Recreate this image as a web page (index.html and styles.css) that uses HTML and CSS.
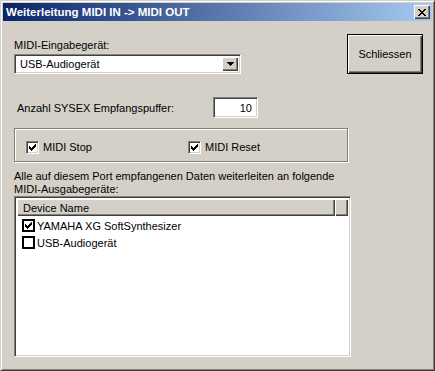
FILE: index.html
```html
<!DOCTYPE html>
<html lang="de">
<head>
    <meta charset="UTF-8">
    <meta name="viewport" content="width=device-width, initial-scale=1.0">
    <title>Weiterleitung MIDI IN -&gt; MIDI OUT</title>
    <link rel="stylesheet" href="styles.css">
</head>
<body>
    <div class="window">
        <div class="titlebar">
            <span class="title">Weiterleitung MIDI IN -&gt; MIDI OUT</span>
            <div class="close-btn">
                <svg width="8" height="7" viewBox="0 0 8 7" shape-rendering="crispEdges">
                    <path d="M0 0h2v1h-2z M6 0h2v1h-2z M1 1h2v1h-2z M5 1h2v1h-2z M2 2h4v1h-4z M3 3h2v1h-2z M2 4h4v1h-4z M1 5h2v1h-2z M5 5h2v1h-2z M0 6h2v1h-2z M6 6h2v1h-2z" fill="#000"/>
                </svg>
            </div>
        </div>

        <div class="content">
            <div class="top-row">
                <div class="input-group">
                    <label>MIDI-Eingabegerät:</label>
                    <div class="combo">
                        <span class="combo-text">USB-Audiogerät</span>
                        <span class="combo-btn">
                            <svg width="7" height="4" viewBox="0 0 7 4" shape-rendering="crispEdges">
                                <path d="M0 0h7v1h-7z M1 1h5v1h-5z M2 2h3v1h-3z M3 3h1v1h-1z" fill="#000"/>
                            </svg>
                        </span>
                    </div>
                </div>
                <button type="button" class="btn-default">Schliessen</button>
            </div>

            <div class="sysex-row">
                <label>Anzahl SYSEX Empfangspuffer:</label>
                <div class="num-box">10</div>
            </div>

            <div class="group">
                <div class="check first">
                    <span class="box">
                        <svg width="7" height="7" viewBox="0 0 7 7" shape-rendering="crispEdges"><path class="tick" d="M6 0h1v1h-1z M5 1h2v1h-2z M0 2h1v1h-1z M4 2h3v1h-3z M0 3h2v1h-2z M3 3h3v1h-3z M0 4h5v1h-5z M1 5h3v1h-3z M2 6h1v1h-1z"/></svg>
                    </span>
                    <span>MIDI Stop</span>
                </div>
                <div class="check">
                    <span class="box">
                        <svg width="7" height="7" viewBox="0 0 7 7" shape-rendering="crispEdges"><path class="tick" d="M6 0h1v1h-1z M5 1h2v1h-2z M0 2h1v1h-1z M4 2h3v1h-3z M0 3h2v1h-2z M3 3h3v1h-3z M0 4h5v1h-5z M1 5h3v1h-3z M2 6h1v1h-1z"/></svg>
                    </span>
                    <span>MIDI Reset</span>
                </div>
            </div>

            <p class="info">Alle auf diesem Port empfangenen Daten weiterleiten an folgende<br>MIDI-Ausgabegeräte:</p>

            <div class="listview">
                <div class="lv-header">
                    <div class="lv-col name">Device Name</div>
                    <div class="lv-col rest"></div>
                </div>
                <div class="lv-body">
                    <div class="lv-row">
                        <span class="flat-box">
                            <svg width="7" height="7" viewBox="0 0 7 7" shape-rendering="crispEdges"><path class="tick" d="M6 0h1v1h-1z M5 1h2v1h-2z M0 2h1v1h-1z M4 2h3v1h-3z M0 3h2v1h-2z M3 3h3v1h-3z M0 4h5v1h-5z M1 5h3v1h-3z M2 6h1v1h-1z"/></svg>
                        </span>
                        <span>YAMAHA XG SoftSynthesizer</span>
                    </div>
                    <div class="lv-row">
                        <span class="flat-box"></span>
                        <span>USB-Audiogerät</span>
                    </div>
                </div>
            </div>
        </div>
    </div>
</body>
</html>
```

FILE: styles.css
```css
body {
    margin: 0;
    font-family: "Liberation Sans", Arial, sans-serif;
    font-size: 11px;
    color: #000;
    background: #d4d0c8;
}
.window {
    width: 435px;
    height: 371px;
    box-sizing: border-box;
    border: 1px solid;
    border-color: #d4d0c8 #404040 #404040 #d4d0c8;
    box-shadow: inset 1px 1px #fff, inset -1px -1px #808080;
    padding: 2px;
    background: #d4d0c8;
}
.titlebar {
    height: 18px;
    display: flex;
    align-items: center;
    justify-content: space-between;
    padding: 0 2px 0 3px;
    background: linear-gradient(to right, #0a246a, #a6caf0);
    color: #fff;
}
.title {
    font-weight: bold;
    font-size: 11.5px;
}
.close-btn {
    width: 16px;
    height: 14px;
    display: flex;
    align-items: center;
    justify-content: center;
    background: #d4d0c8;
    box-shadow: inset 1px 1px #fff, inset -1px -1px #404040, inset -2px -2px #808080;
}

.content {
    padding-left: 11px;
}
.top-row {
    display: flex;
    align-items: flex-start;
}
.input-group {
    padding-top: 18px;
}
.input-group label {
    display: block;
    line-height: 13px;
    margin-bottom: 2px;
}
.combo {
    width: 227px;
    height: 20px;
    box-sizing: border-box;
    display: flex;
    align-items: center;
    padding: 2px;
    background: #fff;
    border: 1px solid;
    border-color: #808080 #fff #fff #808080;
    box-shadow: inset 1px 1px #404040, inset -1px -1px #d4d0c8;
}
.combo-text {
    flex: 1;
    padding-left: 3px;
}
.combo-btn {
    width: 16px;
    height: 14px;
    display: flex;
    align-items: center;
    justify-content: center;
    background: #d4d0c8;
    box-shadow: inset 1px 1px #fff, inset -1px -1px #404040, inset -2px -2px #808080;
}
.btn-default {
    margin: 13px 9px 0 auto;
    width: 76px;
    height: 40px;
    font-family: inherit;
    font-size: 11px;
    color: #000;
    background: #d4d0c8;
    border: 1px solid #000;
    box-shadow: inset 1px 1px #fff, inset -1px -1px #404040, inset -2px -2px #808080;
    padding: 0;
}

.sysex-row {
    display: flex;
    align-items: center;
    margin-top: 23px;
    padding-left: 3px;
}
.sysex-row label {
    width: 196px;
}
.num-box {
    width: 45px;
    height: 21px;
    box-sizing: border-box;
    display: flex;
    align-items: center;
    justify-content: flex-end;
    padding-right: 5px;
    background: #fff;
    border: 1px solid;
    border-color: #808080 #fff #fff #808080;
    box-shadow: inset 1px 1px #404040, inset -1px -1px #d4d0c8;
}

.group {
    margin-top: 10px;
    width: 334px;
    height: 34px;
    box-sizing: border-box;
    display: flex;
    align-items: flex-start;
    padding: 12px 0 0 11px;
    border: 1px solid #808080;
    box-shadow: inset 1px 1px #fff, 1px 1px #fff;
}
.check {
    display: flex;
    align-items: center;
    gap: 4px;
    line-height: 13px;
}
.check.first {
    width: 162px;
}
.box {
    width: 13px;
    height: 13px;
    box-sizing: border-box;
    display: flex;
    align-items: center;
    justify-content: center;
    background: #fff;
    border: 1px solid;
    border-color: #808080 #fff #fff #808080;
    box-shadow: inset 1px 1px #404040, inset -1px -1px #d4d0c8;
}
.tick {
    fill: #000;
}

.info {
    margin: 8px 0 0;
    line-height: 13px;
}

.listview {
    width: 337px;
    height: 161px;
    box-sizing: border-box;
    padding: 2px;
    background: #fff;
    border: 1px solid;
    border-color: #808080 #fff #fff #808080;
    box-shadow: inset 1px 1px #404040, inset -1px -1px #d4d0c8;
}
.lv-header {
    display: flex;
    height: 17px;
}
.lv-col {
    background: #d4d0c8;
    box-shadow: inset 1px 1px #fff, inset -1px -1px #404040, inset -2px -2px #808080;
    display: flex;
    align-items: center;
}
.lv-col.name {
    width: 318px;
    padding-left: 6px;
    box-sizing: border-box;
}
.lv-col.rest {
    flex: 1;
}
.lv-body {
    padding-top: 1px;
}
.lv-row {
    display: flex;
    align-items: center;
    height: 17px;
    padding-left: 5px;
    gap: 2px;
}
.flat-box {
    width: 13px;
    height: 13px;
    box-sizing: border-box;
    display: flex;
    align-items: center;
    justify-content: center;
    border: 1px solid #000;
    box-shadow: inset 0 0 0 1px #000;
    background: #fff;
}
```
